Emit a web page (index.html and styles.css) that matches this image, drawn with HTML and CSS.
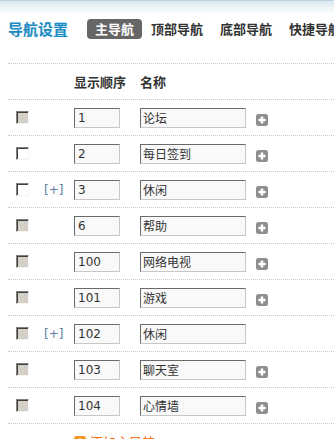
FILE: index.html
```html
<!DOCTYPE html>
<html lang="zh-CN">
<head>
    <meta charset="UTF-8">
    <meta name="viewport" content="width=device-width, initial-scale=1.0">
    <title>导航设置</title>
    <link rel="stylesheet" href="styles.css">
</head>
<body>
    <div class="page">
        <div class="nav-head">
            <h1 class="nav-title">导航设置</h1>
            <ul class="tabs">
                <li class="tab active">主导航</li>
                <li class="tab">顶部导航</li>
                <li class="tab">底部导航</li>
                <li class="tab">快捷导航</li>
            </ul>
        </div>

        <div class="nav-list">
            <div class="row row-head">
                <span></span>
                <span></span>
                <span>显示顺序</span>
                <span>名称</span>
            </div>

            <div class="row">
                <span class="cell-check"><span class="check disabled"></span></span>
                <span></span>
                <span><input class="order" type="text" value="1"></span>
                <span class="cell-name"><input class="name" type="text" value="论坛"><span class="plus"><svg width="12" height="12" viewBox="0 0 12 12"><rect width="12" height="12" rx="2.5" fill="#8e8e8e"/><path d="M6 2.5v7M2.5 6h7" stroke="#fff" stroke-width="2.4"/></svg></span></span>
            </div>

            <div class="row">
                <span class="cell-check"><span class="check"></span></span>
                <span></span>
                <span><input class="order" type="text" value="2"></span>
                <span class="cell-name"><input class="name" type="text" value="每日签到"><span class="plus"><svg width="12" height="12" viewBox="0 0 12 12"><rect width="12" height="12" rx="2.5" fill="#8e8e8e"/><path d="M6 2.5v7M2.5 6h7" stroke="#fff" stroke-width="2.4"/></svg></span></span>
            </div>

            <div class="row">
                <span class="cell-check"><span class="check"></span></span>
                <span class="sub">[+]</span>
                <span><input class="order" type="text" value="3"></span>
                <span class="cell-name"><input class="name" type="text" value="休闲"><span class="plus"><svg width="12" height="12" viewBox="0 0 12 12"><rect width="12" height="12" rx="2.5" fill="#8e8e8e"/><path d="M6 2.5v7M2.5 6h7" stroke="#fff" stroke-width="2.4"/></svg></span></span>
            </div>

            <div class="row">
                <span class="cell-check"><span class="check disabled"></span></span>
                <span></span>
                <span><input class="order" type="text" value="6"></span>
                <span class="cell-name"><input class="name" type="text" value="帮助"><span class="plus"><svg width="12" height="12" viewBox="0 0 12 12"><rect width="12" height="12" rx="2.5" fill="#8e8e8e"/><path d="M6 2.5v7M2.5 6h7" stroke="#fff" stroke-width="2.4"/></svg></span></span>
            </div>

            <div class="row">
                <span class="cell-check"><span class="check disabled"></span></span>
                <span></span>
                <span><input class="order" type="text" value="100"></span>
                <span class="cell-name"><input class="name" type="text" value="网络电视"><span class="plus"><svg width="12" height="12" viewBox="0 0 12 12"><rect width="12" height="12" rx="2.5" fill="#8e8e8e"/><path d="M6 2.5v7M2.5 6h7" stroke="#fff" stroke-width="2.4"/></svg></span></span>
            </div>

            <div class="row">
                <span class="cell-check"><span class="check disabled"></span></span>
                <span></span>
                <span><input class="order" type="text" value="101"></span>
                <span class="cell-name"><input class="name" type="text" value="游戏"><span class="plus"><svg width="12" height="12" viewBox="0 0 12 12"><rect width="12" height="12" rx="2.5" fill="#8e8e8e"/><path d="M6 2.5v7M2.5 6h7" stroke="#fff" stroke-width="2.4"/></svg></span></span>
            </div>

            <div class="row">
                <span class="cell-check"><span class="check disabled"></span></span>
                <span class="sub">[+]</span>
                <span><input class="order" type="text" value="102"></span>
                <span class="cell-name"><input class="name" type="text" value="休闲"></span>
            </div>

            <div class="row">
                <span class="cell-check"><span class="check disabled"></span></span>
                <span></span>
                <span><input class="order" type="text" value="103"></span>
                <span class="cell-name"><input class="name" type="text" value="聊天室"><span class="plus"><svg width="12" height="12" viewBox="0 0 12 12"><rect width="12" height="12" rx="2.5" fill="#8e8e8e"/><path d="M6 2.5v7M2.5 6h7" stroke="#fff" stroke-width="2.4"/></svg></span></span>
            </div>

            <div class="row">
                <span class="cell-check"><span class="check disabled"></span></span>
                <span></span>
                <span><input class="order" type="text" value="104"></span>
                <span class="cell-name"><input class="name" type="text" value="心情墙"><span class="plus"><svg width="12" height="12" viewBox="0 0 12 12"><rect width="12" height="12" rx="2.5" fill="#8e8e8e"/><path d="M6 2.5v7M2.5 6h7" stroke="#fff" stroke-width="2.4"/></svg></span></span>
            </div>

            <div class="row-add">
                <a class="add-link" href="#"><svg width="12" height="12" viewBox="0 0 12 12"><rect width="12" height="12" rx="3" fill="#f7941d"/><path d="M6 2.5v7M2.5 6h7" stroke="#fff" stroke-width="2"/></svg>添加主导航</a>
            </div>
        </div>
    </div>
</body>
</html>
```

FILE: styles.css
```css
body {
    margin: 0;
    padding: 0;
    font-family: "DejaVu Sans", "Noto Sans CJK SC", sans-serif;
    font-size: 12px;
    color: #333;
    background: linear-gradient(#d6e6ee, #ffffff 14px) no-repeat;
    border-top: 1px solid #bcd4e0;
    overflow: hidden;
}
.page {
    margin-left: 8px;
    width: 420px;
}
.nav-head {
    display: flex;
    align-items: center;
    box-sizing: border-box;
    height: 63px;
    padding-top: 18px;
    align-items: flex-start;
    border-bottom: 1px dotted #c8c8c8;
}
.nav-title {
    margin: 0 19px 0 0;
    font-family: "Noto Sans CJK SC", sans-serif;
    font-size: 15px;
    line-height: 20px;
    font-weight: bold;
    color: #1e8cc2;
    text-shadow: 0 0 2px #d8f0fa;
}
.tabs {
    display: flex;
    margin: 0;
    padding: 0;
    list-style: none;
    white-space: nowrap;
}
.tab {
    padding: 0 8px;
    margin-right: 1px;
    font-family: "Noto Sans CJK SC", sans-serif;
    font-size: 13px;
    line-height: 20px;
    font-weight: bold;
    color: #333;
    border-radius: 4px;
}
.tab.active {
    background-color: #666;
    color: #fff;
}
.row {
    display: grid;
    grid-template-columns: 36px 30px 66px 1fr;
    align-items: center;
    height: 36px;
    box-sizing: border-box;
    border-bottom: 1px dotted #c8c8c8;
}
.row-head {
    font-family: "Noto Sans CJK SC", sans-serif;
    font-size: 13px;
    font-weight: bold;
}
.cell-check {
    padding-left: 8px;
    display: flex;
}
.check {
    display: inline-block;
    width: 13px;
    height: 13px;
    box-sizing: border-box;
    border-top: 1px solid #808080;
    border-left: 1px solid #808080;
    border-right: 1px solid #f4f4f4;
    border-bottom: 1px solid #f4f4f4;
    box-shadow: inset 1px 1px 0 #404040;
    background: #fff;
}
.check.disabled {
    background: #d4d0c8;
}
.sub {
    color: #5a7ba3;
    font-size: 12px;
}
.order,
.name {
    box-sizing: border-box;
    height: 20px;
    margin: 0;
    padding: 0 3px;
    font-family: "DejaVu Sans", "Noto Sans CJK SC", sans-serif;
    font-size: 12px;
    color: #333;
    background: #f9f9f9;
    border-top: 1px solid #6a6a6a;
    border-left: 1px solid #6a6a6a;
    border-right: 1px solid #c8c8c8;
    border-bottom: 1px solid #c8c8c8;
    outline: none;
}
.order {
    width: 46px;
}
.name {
    width: 106px;
    padding-left: 2px;
}
.cell-name {
    display: flex;
    align-items: center;
}
.plus {
    display: flex;
    margin: 4px 0 0 10px;
}
.row-add {
    padding: 8px 0 0 66px;
}
.add-link {
    display: inline-flex;
    align-items: center;
    gap: 4px;
    font-family: "Noto Sans CJK SC", sans-serif;
    font-size: 13px;
    color: #f60;
    text-decoration: none;
}
```
